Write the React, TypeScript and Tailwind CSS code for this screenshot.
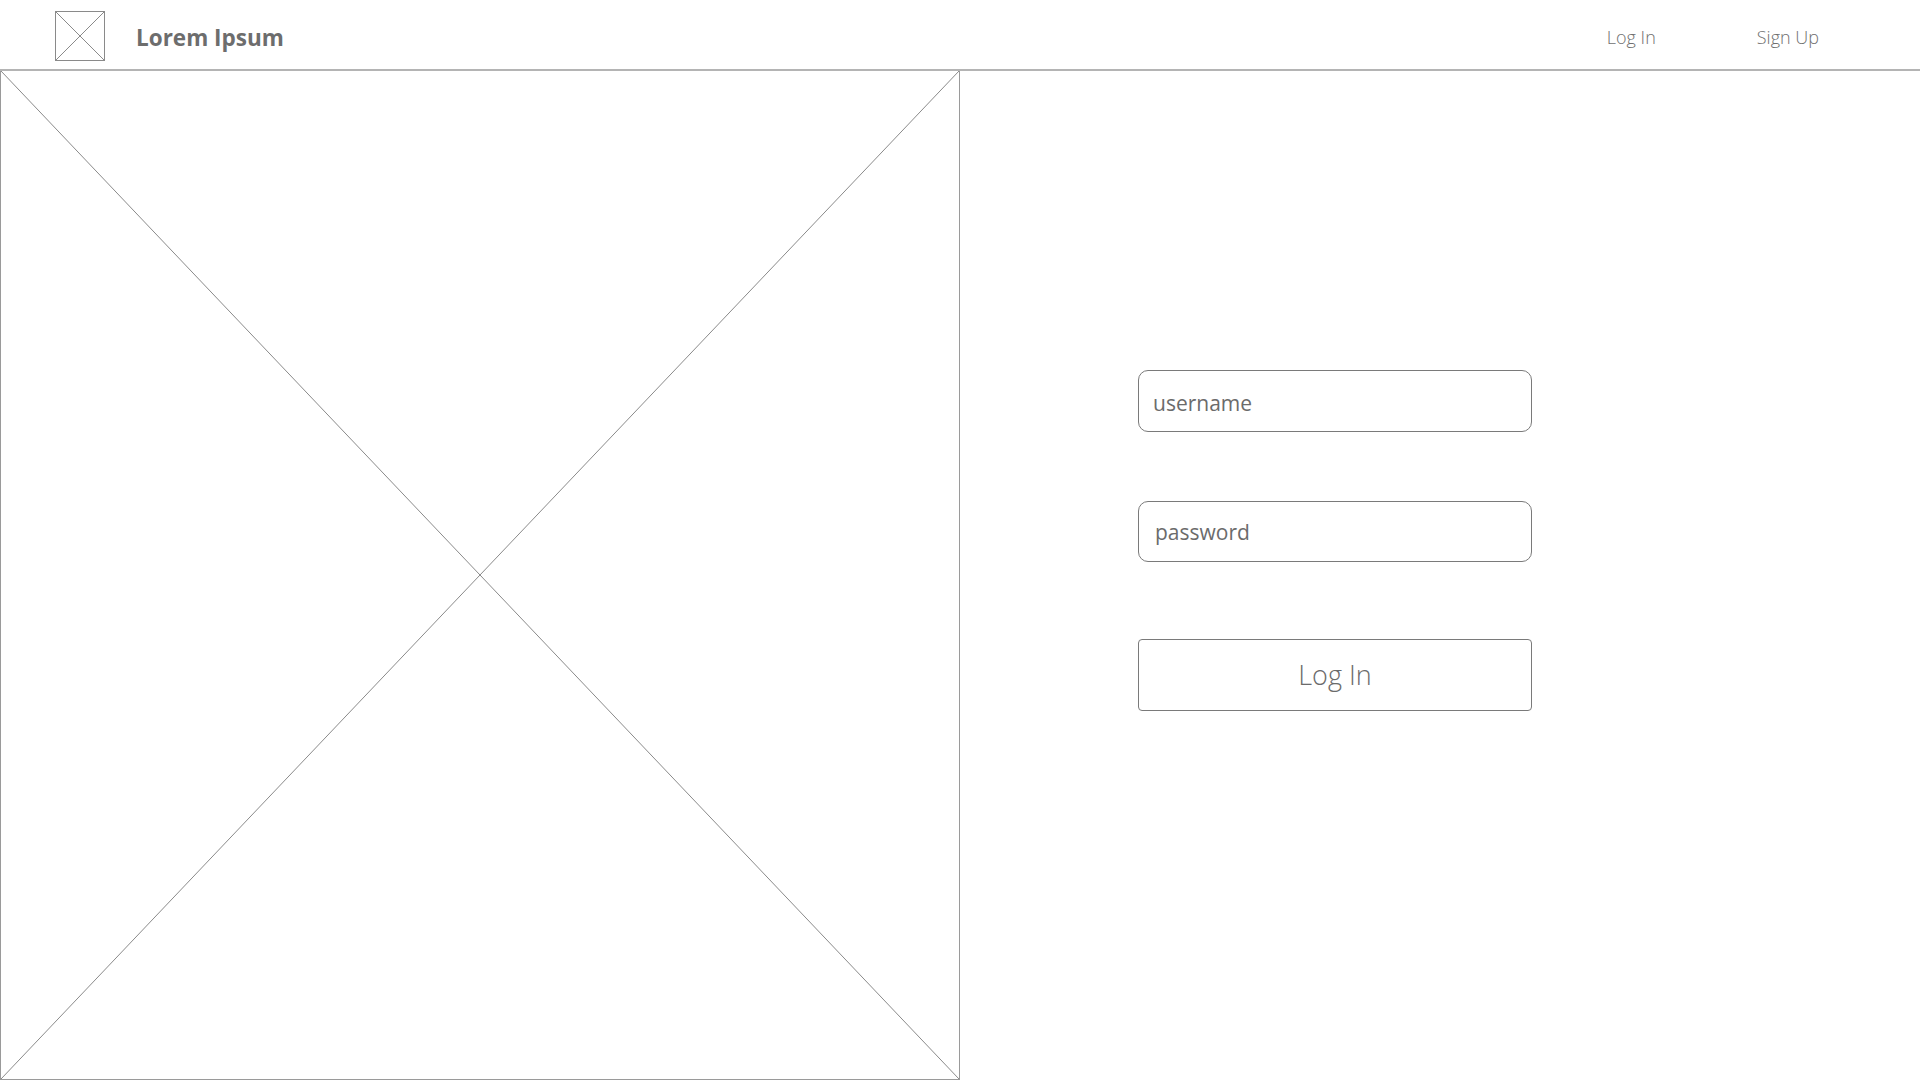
import React from "react";

function XBox({ className = "" }: { className?: string }) {
  return (
    <div className={`relative ${className}`}>
      <svg className="absolute inset-0 w-full h-full" preserveAspectRatio="none" viewBox="0 0 100 100">
        <line x1="0" y1="0" x2="100" y2="100" stroke="#8a8a8a" strokeWidth="1" vectorEffect="non-scaling-stroke" />
        <line x1="100" y1="0" x2="0" y2="100" stroke="#8a8a8a" strokeWidth="1" vectorEffect="non-scaling-stroke" />
      </svg>
    </div>
  );
}

export default function App() {
  return (
    <div
      className="w-[1920px] h-[1080px] bg-white flex flex-col overflow-hidden text-[#6b6b6b]"
      style={{ fontFamily: '"Open Sans", "Noto Sans", sans-serif' }}
    >
      <header className="h-[71px] shrink-0 flex items-start border-b-[2px] border-[#b4b4b4] pl-[55px] pr-[101px]">
        <XBox className="w-[50px] h-[50px] border border-[#8a8a8a] mt-[11px]" />
        <div className="ml-[31px] mt-[22px] text-[22.5px] leading-[32px] font-bold text-[#6d6d6d]">Lorem Ipsum</div>
        <nav className="ml-auto mt-[24px] flex items-center gap-[101px] text-[18px] leading-[26px] font-light text-[#707070]">
          <a className="cursor-pointer">Log In</a>
          <a className="cursor-pointer">Sign Up</a>
        </nav>
      </header>
      <main className="flex-1 flex">
        <XBox className="w-[960px] h-full border border-[#9a9a9a] border-t-0" />
        <div className="flex-1 pl-[178px] pt-[299px]">
          <div className="w-[394px] flex flex-col">
            <div className="h-[62px] rounded-[10px] border border-[#7a7a7a] flex items-center pl-[14px] text-[21px] pt-[5px]">
              username
            </div>
            <div className="h-[61px] mt-[69px] rounded-[10px] border border-[#7a7a7a] flex items-center pl-[16px] text-[21px] pt-[3px]">
              password
            </div>
            <button className="h-[72px] mt-[77px] rounded-[4px] border border-[#7a7a7a] flex items-center justify-center text-[27px] font-light text-[#6b6b6b]">
              Log In
            </button>
          </div>
        </div>
      </main>
    </div>
  );
}
